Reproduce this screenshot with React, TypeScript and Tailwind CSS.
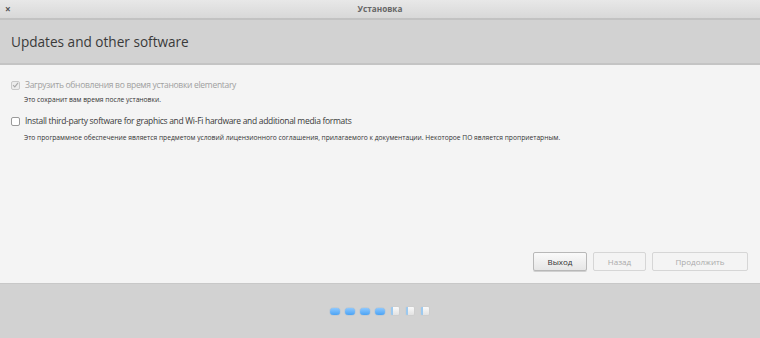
const Dot = ({ done }: { done: boolean }) => (
  <span className="flex w-[10px] justify-center">
    {done ? (
      <span className="block h-[7px] w-[10px] rounded-full bg-gradient-to-b from-[#8cc8ff] to-[#4aa3f5] shadow-[0_0_1px_#3a8ad8]" />
    ) : (
      <span className="block h-[8px] w-[8px] rounded-[1px] border-l-2 border-l-[#9cc9ef] bg-gradient-to-b from-[#fafafa] to-[#e2e2e2] shadow-[0_0_1px_#aaa]" />
    )}
  </span>
);

export default function App() {
  const steps = [true, true, true, true, false, false, false];

  return (
    <div className="flex h-[338px] w-[760px] flex-col overflow-hidden bg-[#f4f4f4] font-['Open_Sans',sans-serif]">
      {/* title bar */}
      <div className="relative flex h-[20px] items-center justify-center border-b-2 border-[#c2c2c2] bg-gradient-to-b from-[#e8e8e8] to-[#d8d8d8]">
        <span className="absolute left-[5px] top-[2px] text-[10px] font-bold text-[#555]">×</span>
        <span className="text-[8.2px] font-bold text-[#666]">Установка</span>
      </div>

      {/* header */}
      <div className="flex h-[45px] items-center border-b-2 border-[#c4c4c4] bg-[#d2d2d2] px-[11px] pt-[2px]">
        <h1 className="text-[13.6px] text-[#3a3a3a]">Updates and other software</h1>
      </div>

      {/* content */}
      <div className="flex flex-1 flex-col px-[11px] pt-[14px]">
        <label className="flex items-center gap-[5px]">
          <span className="flex h-[9px] w-[9px] items-center justify-center rounded-[2px] border border-[#c8c8c8] bg-[#ececec]">
            <svg viewBox="0 0 10 10" className="h-[8px] w-[8px]">
              <path d="M1.5 5.2 L4 7.6 L8.6 2" fill="none" stroke="#a8a8a8" strokeWidth="1.6" />
            </svg>
          </span>
          <span className="text-[8.5px] tracking-[-0.3px] text-[#a0a0a0]">Загрузить обновления во время установки elementary</span>
        </label>
        <p className="mt-[3px] pl-[13px] text-[6.7px] text-[#333]">Это сохранит вам время после установки.</p>

        <label className="mt-[10px] flex items-center gap-[5px]">
          <span className="h-[9px] w-[9px] rounded-[2px] border border-[#9a9a9a] bg-white" />
          <span className="text-[8.5px] tracking-[-0.3px] text-[#3a3a3a]">Install third-party software for graphics and Wi-Fi hardware and additional media formats</span>
        </label>
        <p className="mt-[5px] pl-[13px] text-[6.7px] text-[#333]">
          Это программное обеспечение является предметом условий лицензионного соглашения, прилагаемого к документации. Некоторое ПО является проприетарным.
        </p>

        <div className="mt-auto mb-[12px] flex justify-end gap-[6px] pr-[1px]">
          <button className="h-[19px] w-[54px] rounded-[2px] border border-[#b8b8b8] bg-gradient-to-b from-[#fafafa] to-[#e6e6e6] text-[8px] text-[#333] shadow-[0_1px_0_#d0d0d0]">
            Выход
          </button>
          <button className="h-[19px] w-[53px] rounded-[2px] border border-[#d6d6d6] bg-[#f4f4f4] text-[8px] text-[#aaa]">
            Назад
          </button>
          <button className="h-[19px] w-[96px] rounded-[2px] border border-[#d6d6d6] bg-[#f4f4f4] text-[8px] text-[#aaa]">
            Продолжить
          </button>
        </div>
      </div>

      {/* footer */}
      <div className="flex h-[55px] items-center justify-center gap-[5px] border-t border-[#c8c8c8] bg-[#d2d2d2]">
        {steps.map((d, i) => (
          <Dot key={i} done={d} />
        ))}
      </div>
    </div>
  );
}
